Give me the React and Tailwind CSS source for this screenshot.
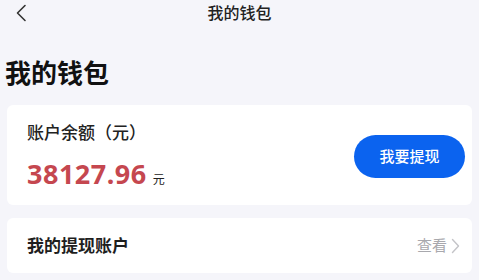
export default function App() {
  const font = { fontFamily: '"Noto Sans", "Noto Sans CJK SC", sans-serif' };
  return (
    <div className="w-[479px] h-[280px] overflow-hidden bg-[#f5f5fa] text-[#1a1a1a]" style={font}>
      <div className="relative h-[25px] flex items-center justify-center">
        <svg className="absolute left-[14px] top-[4px]" width="14" height="18" viewBox="0 0 14 18" fill="none">
          <path d="M11 1.5 L3.5 9 L11 16.5" stroke="#333" strokeWidth="1.6" strokeLinecap="round" strokeLinejoin="round" />
        </svg>
        <span className="text-[16px] leading-none text-[#222] font-medium">我的钱包</span>
      </div>
      <div className="pl-[5px] pt-[34px] h-[80px]">
        <h1 className="text-[26px] leading-[28px] font-bold text-[#111]">我的钱包</h1>
      </div>
      <div className="mx-[7px] h-[100px] bg-white rounded-[6px] flex items-center justify-between pl-[20px] pr-[7px]">
        <div className="flex flex-col">
          <span className="text-[17px] leading-[20px] text-[#222] font-medium">账户余额（元）</span>
          <div className="flex items-end mt-[17px]">
            <span className="text-[27px] leading-[28px] font-bold text-[#c5474f] tracking-[0.5px]">38127.96</span>
            <span className="text-[12px] leading-[14px] ml-[6px] mb-[1px] text-[#222]">元</span>
          </div>
        </div>
        <button className="w-[111px] h-[43px] rounded-full bg-[#0b63ef] text-white text-[15px] font-medium mt-[2px]">我要提现</button>
      </div>
      <div className="mx-[7px] mt-[13px] h-[55px] bg-white rounded-[6px] flex items-center justify-between pl-[20px] pr-[12px]">
        <span className="text-[17px] font-semibold text-[#1e1e1e]">我的提现账户</span>
        <div className="flex items-center gap-[4px] text-[#a8a8ad]">
          <span className="text-[15px]">查看</span>
          <svg width="9" height="16" viewBox="0 0 9 16" fill="none">
            <path d="M1.5 1.5 L7.5 8 L1.5 14.5" stroke="#c4c4c8" strokeWidth="1.4" strokeLinecap="round" strokeLinejoin="round" />
          </svg>
        </div>
      </div>
    </div>
  );
}
